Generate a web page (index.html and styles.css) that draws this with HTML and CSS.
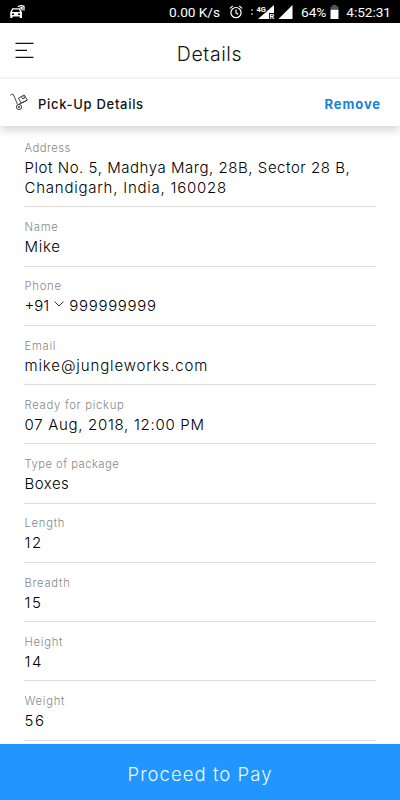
FILE: index.html
```html
<!DOCTYPE html>
<html lang="en">
<head>
    <meta charset="UTF-8">
    <meta name="viewport" content="width=device-width, initial-scale=1.0">
    <title>Details</title>
    <link rel="stylesheet" href="styles.css">
</head>
<body>

<!-- Status bar -->
<div class="status-bar">
    <svg class="car-icon" width="16" height="14" viewBox="0 0 16 14">
        <path fill="#fff" fill-rule="evenodd" d="M2.2 3.2h7.6L12 7.5v5.6H9.7v-1.5H2.5v1.5H.2V7.5zM3 4.5 2 7h8L9 4.5zM2 8.6v1.5h2V8.6zm6 0v1.5h2V8.6z"/>
        <path fill="none" stroke="#fff" stroke-width="1.3" d="M8 1.8q3-2 6-.4v4.2M10 3.2l2-.7v3"/>
    </svg>
    <span class="speed">0.00 K/s</span>
    <svg class="alarm-icon" width="14" height="14" viewBox="0 0 14 14" fill="none" stroke="#fff" stroke-width="1.2">
        <circle cx="7" cy="7.6" r="5.1"/>
        <path d="M7 4.6v3.2l2.2 1.4M.8 3.4 3.8.9M13.2 3.4l-3-2.5"/>
    </svg>
    <svg class="signal-icon" width="43" height="15" viewBox="0 0 43 15">
        <path fill="#777" d="M1 4h2v2H1zM1 8h2v2H1z"/>
        <path fill="#fff" d="M24 0v8h-5v6H8z"/>
        <path fill="#000" d="M5 0h11v7.500H5z"/>
        <text class="signal-text" x="6.5" y="6.5">4G</text>
        <text class="signal-text" x="19.5" y="14">R</text>
        <path fill="#fff" d="M42.5 0v14H28.5z"/>
    </svg>
    <span class="battery">64%</span>
    <svg class="battery-icon" width="9" height="14" viewBox="0 0 9 14">
        <path fill="#555" d="M2.5 0h4v1.5h2V5H.5V1.5h2z"/>
        <path fill="#fff" d="M.5 4.8h8V14h-8z"/>
    </svg>
    <span class="clock">4:52:31</span>
</div>

<!-- Header -->
<header>
    <svg class="menu-icon" width="19" height="17" viewBox="0 0 19 17" stroke="#111" stroke-width="1.2">
        <path d="M.5 1.4h18M.5 8.4h11.5M.5 15.4h18"/>
    </svg>
    <h1>Details</h1>
</header>

<!-- Section title -->
<div class="section-title">
    <svg class="trolley-icon" width="19" height="18" viewBox="0 0 19 18" fill="none" stroke="#333" stroke-width="0.9">
        <path d="M.5 2.7Q1.5.2 3.3 1.4L7.6 11.6M9 11.200l8-3.700"/>
        <circle cx="9" cy="14" r="2.6"/>
        <circle cx="9" cy="14" r=".8"/>
        <path d="m8.500 5 5.700-3 3.200 5.100-6.400 3zM11.5 3.700l1.200 2.300 2-1-1.200-2.200"/>
    </svg>
    <h2>Pick-Up Details</h2>
    <button class="remove-button">Remove</button>
</div>

<!-- Order fields -->
<div class="fields">
    <div class="field">
        <div class="label label-address">Address</div>
        <div class="value address"><span class="line-one">Plot No. 5, Madhya Marg, 28B, Sector 28 B,</span><br><span class="line-two">Chandigarh, India, 160028</span></div>
    </div>
    <div class="field">
        <div class="label">Name</div>
        <div class="value name">Mike</div>
    </div>
    <div class="field">
        <div class="label">Phone</div>
        <div class="value phone">
            <span class="code">+91</span>
            <svg width="10" height="6" viewBox="0 0 10 6" fill="none" stroke="#333" stroke-width="1"><path d="M.5.5 5 5 9.5.5"/></svg>
            <span class="number">999999999</span>
        </div>
    </div>
    <div class="field">
        <div class="label">Email</div>
        <div class="value email">mike@jungleworks.com</div>
    </div>
    <div class="field">
        <div class="label">Ready for pickup</div>
        <div class="value date">07 Aug, 2018, 12:00 PM</div>
    </div>
    <div class="field">
        <div class="label label-type">Type of package</div>
        <div class="value boxes">Boxes</div>
    </div>
    <div class="field">
        <div class="label">Length</div>
        <div class="value size">12</div>
    </div>
    <div class="field">
        <div class="label">Breadth</div>
        <div class="value size">15</div>
    </div>
    <div class="field">
        <div class="label">Height</div>
        <div class="value size">14</div>
    </div>
    <div class="field">
        <div class="label">Weight</div>
        <div class="value size">56</div>
    </div>
</div>

<button class="pay-button">Proceed to Pay</button>

</body>
</html>
```

FILE: styles.css
```css
* {
    box-sizing: border-box;
}

body {
    font-family: Inter, 'Open Sans', sans-serif;
    background-color: #fff;
    color: #111;
    margin: 0;
    height: 800px;
    display: flex;
    flex-direction: column;
    overflow: hidden;
}

h1, h2 {
    margin: 0;
}

button {
    font-family: inherit;
    border: none;
    padding: 0;
    cursor: pointer;
}

/* Status bar */
.status-bar {
    flex: none;
    height: 23px;
    background-color: #000;
    color: #fff;
    font-family: Roboto, sans-serif;
    font-size: 13.7px;
    line-height: 24px;
    display: flex;
    align-items: center;
    padding: 1px 9px 0 10px;
    white-space: nowrap;
}

.speed {
    margin-left: auto;
}

.alarm-icon {
    margin-left: 9px;
}

.signal-icon {
    margin-left: 7px;
}

.signal-text {
    font-family: Roboto, sans-serif;
    font-size: 7.5px;
    font-weight: 700;
    fill: #fff;
}

.battery {
    margin-left: 8px;
}

.battery-icon {
    margin: 0 7px 0 4px;
}

.speed, .battery, .clock {
    letter-spacing: -0.05px;
}

/* Header */
header {
    flex: none;
    height: 56px;
    display: grid;
    grid-template-columns: 1fr auto 1fr;
    align-items: center;
    padding: 7px 0 0;
    border-bottom: 2px solid #f4f4f4;
}

.menu-icon {
    margin: -6px 0 0 15px;
}

h1 {
    font-size: 19.5px;
    font-weight: 300;
    letter-spacing: 0.6px;
    padding-left: 19px;
}

/* Section title */
.section-title {
    flex: none;
    height: 47px;
    display: flex;
    align-items: center;
    padding: 3px 19px 0 10px;
    background-color: #fff;
    box-shadow: 0 3px 10px rgba(0, 0, 0, 0.2);
    clip-path: inset(0 0 -14px 0);
}

.trolley-icon {
    margin-top: -4px;
}

h2 {
    font-size: 13px;
    font-weight: 500;
    margin-left: 9px;
    letter-spacing: 0.7px;
}

.remove-button {
    background: none;
    color: #1683d8;
    font-size: 13px;
    font-weight: 700;
    letter-spacing: 0.9px;
    margin: 0 0 0 auto;
}

/* Fields */
.fields {
    flex: 1;
    min-height: 0;
    overflow: hidden;
    padding: 2.4px 24px 0;
}

.field {
    height: 59.25px;
    padding: 11.7px 0 0 0.5px;
    border-bottom: 1px solid #ddd;
}

.field:first-child {
    height: 79px;
}

.label {
    font-size: 11.3px;
    font-weight: 300;
    line-height: 16px;
    letter-spacing: 0.7px;
    color: #888;
}

.label-address, .label-type {
    letter-spacing: 0.45px;
}

.value {
    font-size: 15px;
    font-weight: 300;
    line-height: 20px;
    margin-top: 2px;
    letter-spacing: 0.7px;
    color: #000;
    white-space: nowrap;
}

.address {
    line-height: 19.5px;
}

.line-one {
    letter-spacing: 0.54px;
}

.line-two {
    letter-spacing: 0.77px;
}

.email {
    letter-spacing: 0.88px;
}

.boxes {
    letter-spacing: 0.5px;
}

.size {
    letter-spacing: 1.6px;
}

.phone {
    display: flex;
    align-items: center;
    gap: 5px;
}

.phone svg {
    margin-top: -4px;
}

.code {
    letter-spacing: 0;
}

/* Pay button */
.pay-button {
    flex: none;
    height: 56px;
    background-color: #2196ff;
    color: #e9fbff;
    font-size: 18.5px;
    font-weight: 300;
    letter-spacing: 1.05px;
    padding-top: 4px;
}
```
